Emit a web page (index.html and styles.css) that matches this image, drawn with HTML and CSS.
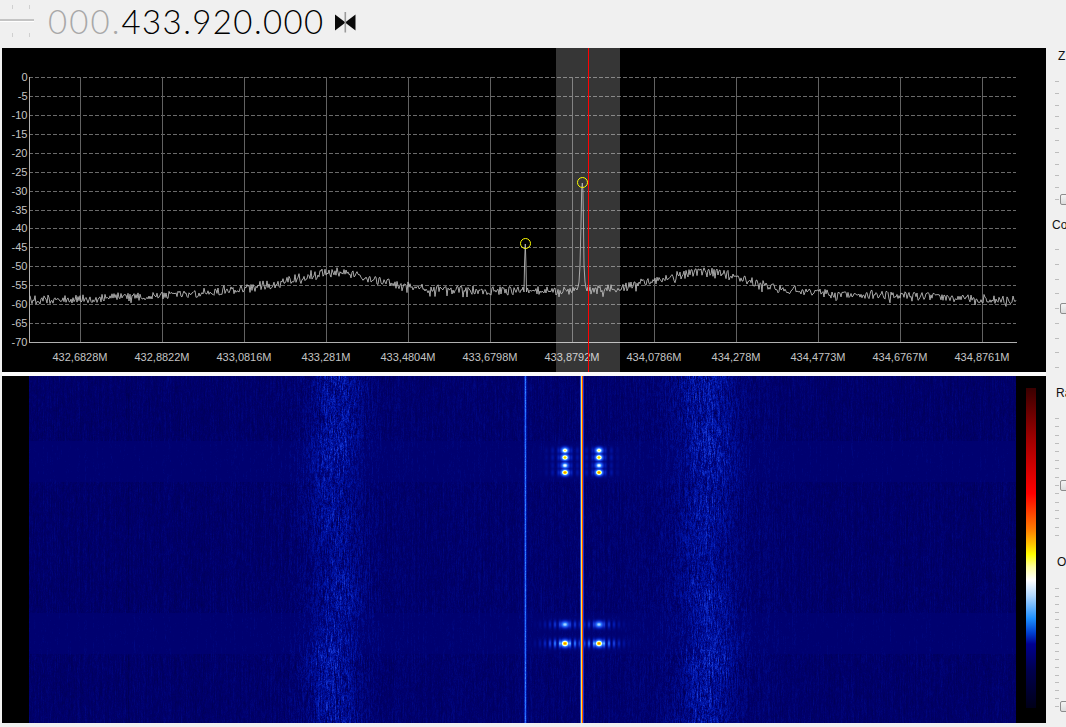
FILE: index.html
```html
<!DOCTYPE html>
<html lang="en">
<head>
<meta charset="utf-8">
<title>Spectrum analyzer</title>
<link rel="stylesheet" href="styles.css">
</head>
<body>
<div class="app">
  <header class="tuner">
    <svg class="dial" width="36" height="48" viewBox="0 0 36 48" aria-hidden="true">
      <rect x="0" y="19" width="34" height="2" fill="#c4c4c4"/>
      <rect x="0" y="21" width="34" height="1" fill="#ffffff"/>
      <rect x="12" y="5" width="1" height="4" fill="#d0d0d0"/>
      <rect x="29" y="5" width="1" height="4" fill="#d0d0d0"/>
      <rect x="12" y="33" width="1" height="4" fill="#d0d0d0"/>
      <rect x="29" y="33" width="1" height="4" fill="#d0d0d0"/>
    </svg>
    <div class="freq"><span class="freq-dim">000.</span>433.920.000</div>
    <svg class="swap" width="21" height="21" viewBox="0 0 21 21" aria-hidden="true">
      <path d="M0 2.5 L10.5 10.5 L0 18.5 Z" fill="#0a0a0a"/>
      <path d="M20.5 2.5 L10 10.5 L20.5 18.5 Z" fill="#0a0a0a"/>
      <rect x="9.5" y="0" width="1.6" height="20.5" fill="#9a9a9a"/>
    </svg>
  </header>
  <main class="body">
    <div class="displays">
      <section class="spectrum">
        <svg id="plot" class="plot" width="1044" height="324" viewBox="0 48 1044 324">
          <g id="grid"></g>
          <g id="ylabels" class="axis-text" text-anchor="end"></g>
          <g id="xlabels" class="axis-text" text-anchor="middle"></g>
          <rect class="band" x="554" y="48" width="64" height="324"/>
          <path id="trace" class="trace" d=""/>
          <circle class="peak" cx="523.5" cy="243.5" r="5"/>
          <circle class="peak" cx="580.5" cy="182.5" r="5"/>
          <rect class="tuned" x="586" y="48" width="1" height="324"/>
        </svg>
      </section>
      <section class="waterfall">
        <canvas id="fall" class="fall" width="987" height="347"></canvas>
        <div class="scale-col"><div class="scale"></div></div>
      </section>
    </div>
    <aside class="controls">
      <div class="group group-zoom">
        <div class="label label-z">Z</div>
        <div class="slider" data-first="18" data-step="11.8" data-ticks="11" data-handle="10"></div>
      </div>
      <div class="group group-contrast">
        <div class="label label-co">Co</div>
        <div class="slider" data-first="17" data-step="14.75" data-ticks="9" data-handle="4"></div>
      </div>
      <div class="group group-range">
        <div class="label label-ra">Ra</div>
        <div class="slider" data-first="18" data-step="8.36" data-ticks="15" data-handle="8"></div>
      </div>
      <div class="group group-offset">
        <div class="label label-o">O</div>
        <div class="slider" data-first="19" data-step="7.87" data-ticks="16" data-handle="15"></div>
      </div>
    </aside>
  </main>
</div>
<script src="app.js"></script>
</body>
</html>
```
FILE: styles.css
```css
* { box-sizing: border-box; }
html, body { margin: 0; padding: 0; height: 100%; overflow: hidden; background: #f0f0f0; }
body { font-family: "Liberation Sans", Arial, sans-serif; }
.app { display: flex; flex-direction: column; width: 1066px; height: 727px; }
.tuner { display: flex; align-items: flex-start; height: 48px; flex: none; }
.dial { flex: none; display: block; margin-right: 12px; }
.freq { font-family: Lato, "Open Sans", sans-serif; font-weight: 300; font-size: 33px; line-height: 42px; letter-spacing: 1.4px; color: #000; white-space: nowrap; width: 287px; }
.freq-dim { color: #a8a8a8; letter-spacing: 2.1px; }
.swap { flex: none; margin-top: 12px; display: block; }
.body { display: flex; flex: 1; min-height: 0; }
.displays { width: 1046px; padding-left: 2px; flex: none; display: flex; flex-direction: column; height: 675px; }
.spectrum { height: 324px; background: #000; flex: none; }
.plot { display: block; }
.axis-text { font-family: "Liberation Sans", Arial, sans-serif; font-size: 11px; fill: #c4c4c4; }
.grid-h { stroke: #6a6a6a; stroke-width: 1; stroke-dasharray: 4 2; shape-rendering: crispEdges; }
.grid-v { stroke: #626262; stroke-width: 1; shape-rendering: crispEdges; }
.grid-axis { stroke: #b0b0b0; stroke-width: 1; shape-rendering: crispEdges; }
.band { fill: rgba(255,255,255,0.21); }
.trace { fill: none; stroke: #b8b8b8; stroke-width: 0.9; }
.peak { fill: none; stroke: #ffff00; stroke-width: 1; }
.tuned { fill: #ff0000; }
.waterfall { display: flex; height: 351px; background: #000; flex: none; padding-left: 27px; border-top: 4px solid #fafafa; }
.fall { display: block; flex: none; }
.scale-col { flex: 1; padding: 12px 0 15px 10px; }
.scale { width: 10px; height: 320px; background: linear-gradient(to bottom, #3a0000 0%, #600000 6%, #a00000 16%, #d80000 26%, #ff0000 33%, #ff7a00 44%, #ffc800 49%, #ffff00 52%, #ffffa0 56%, #ffffff 60%, #b0d8ff 65%, #1e90ff 72%, #0040d0 76.5%, #000090 80%, #000050 88%, #000018 100%); }
.controls { width: 20px; flex: none; display: flex; flex-direction: column; overflow: hidden; height: 679px; }
.group { position: relative; flex: none; }
.group-zoom { height: 169px; }
.group-contrast { height: 168px; }
.group-range { height: 169px; }
.group-offset { height: 165px; }
.label { font-size: 12px; line-height: 14px; color: #111; white-space: nowrap; padding-top: 1px; }
.label-z { padding-left: 12px; }
.label-co { padding-left: 6px; }
.label-ra { padding-left: 10px; }
.label-o { padding-left: 11px; }
.slider { position: relative; }
.tick { position: absolute; left: 9px; width: 4px; height: 1px; background: #bdbdbd; }
.handle { position: absolute; left: 14px; width: 10px; height: 11px; border: 1px solid #8c8c8c; border-radius: 2px; background: linear-gradient(to bottom, #f4f4f4, #dcdcdc); }
```
FILE: app.js
```js
(function () {
  var NS = 'http://www.w3.org/2000/svg';
  var seed = 12345;
  function rnd() { seed = (seed * 1664525 + 1013904223) >>> 0; return seed / 4294967296; }
  function line(parent, cls, x1, y1, x2, y2) {
    var l = document.createElementNS(NS, 'line');
    l.setAttribute('class', cls);
    l.setAttribute('x1', x1); l.setAttribute('y1', y1);
    l.setAttribute('x2', x2); l.setAttribute('y2', y2);
    parent.appendChild(l);
  }
  function text(parent, x, y, s) {
    var t = document.createElementNS(NS, 'text');
    t.setAttribute('x', x); t.setAttribute('y', y);
    t.textContent = s;
    parent.appendChild(t);
  }
  // The svg starts 2px from the page's left edge, so page x = svg x + 2.
  var OX = 2;
  var grid = document.getElementById('grid');
  var yl = document.getElementById('ylabels');
  var xl = document.getElementById('xlabels');
  var i;
  for (i = 0; i <= 14; i++) {
    var y = Math.round(77 + i * 18.93);
    if (i < 14) line(grid, 'grid-h', 29 - OX, y + 0.5, 1016 - OX, y + 0.5);
    text(yl, 27.5 - OX, y + 4, String(i === 0 ? 0 : -5 * i));
  }
  var freqs = ['432,6828M','432,8822M','433,0816M','433,281M','433,4804M','433,6798M','433,8792M','434,0786M','434,278M','434,4773M','434,6767M','434,8761M'];
  for (i = 0; i < 12; i++) {
    var x = Math.round(80 + i * 81.97);
    line(grid, 'grid-v', x - OX + 0.5, 77, x - OX + 0.5, 342);
    text(xl, x - OX, 361, freqs[i]);
  }
  line(grid, 'grid-axis', 29.5 - OX, 77, 29.5 - OX, 342.5);
  line(grid, 'grid-axis', 29 - OX, 342.5, 1017 - OX, 342.5);

  // Spectrum envelope: page x -> page y of the noise floor.
  var env = [[29,300],[100,298],[200,293],[280,283],[310,275],[335,271],[360,276],[390,284],[430,289],[500,291],[580,291],[620,288],[650,281],[680,275],[705,271],[735,276],[770,287],[810,292],[900,296],[1017,300]];
  function envY(x) {
    for (var k = 0; k < env.length - 1; k++) {
      if (x <= env[k + 1][0]) {
        var t = (x - env[k][0]) / (env[k + 1][0] - env[k][0]);
        return env[k][1] + t * (env[k + 1][1] - env[k][1]);
      }
    }
    return 300;
  }
  var d = '';
  var px;
  for (px = 30; px <= 1016; px += 1) {
    var py = envY(px) + (rnd() - 0.5) * 9 + (rnd() > 0.9 ? 3 : 0);
    if (px > 576 && px < 588) continue;
    if (px > 521 && px < 529) continue;
    d += (d ? 'L' : 'M') + (px - OX).toFixed(1) + ' ' + py.toFixed(1);
    if (px === 521) {
      [[522,290],[523,287],[524,292],[524.6,262],[525.3,244],[525.9,262],[526.5,292],[527.5,288],[529,293]].forEach(function (p) {
        d += 'L' + (p[0] - OX) + ' ' + p[1];
      });
    }
    if (px === 576) {
      [[577,290],[578,287],[579,282],[580,265],[581,225],[581.7,190],[582.3,183],[582.9,190],[583.5,225],[584,265],[585,282],[586,288],[587,291]].forEach(function (p) {
        d += 'L' + (p[0] - OX) + ' ' + p[1];
      });
    }
  }
  document.getElementById('trace').setAttribute('d', d);

  // Waterfall.
  var cv = document.getElementById('fall');
  var W = cv.width, H = cv.height;
  var ctx = cv.getContext('2d');
  var img = ctx.createImageData(W, H);
  var stops = [[0,0,0,60],[0.16,0,0,108],[0.3,0,20,165],[0.45,25,60,215],[0.58,40,120,255],[0.68,170,215,255],[0.74,255,255,255],[0.82,255,255,0],[0.9,255,120,0],[1,255,0,0]];
  function color(v) {
    if (v <= 0) return stops[0];
    for (var k = 0; k < stops.length - 1; k++) {
      if (v <= stops[k + 1][0]) {
        var a = stops[k], b = stops[k + 1];
        var t = (v - a[0]) / (b[0] - a[0]);
        return [0, a[1] + t * (b[1] - a[1]), a[2] + t * (b[2] - a[2]), a[3] + t * (b[3] - a[3])];
      }
    }
    return stops[stops.length - 1];
  }
  function gauss(x, c, s) { return Math.exp(-(x - c) * (x - c) / (2 * s * s)); }
  var column = [];
  var walk = [];
  for (px = 0; px < W; px++) { column.push((rnd() - 0.5) * 0.03); walk.push(rnd() - 0.5); }
  var spotsX = [564.5, 598.5];
  var spotsA = [[450, 0.66], [457, 0.72], [465, 0.6], [472, 0.76]];
  for (var row = 0; row < H; row++) {
    var Y = row + 376;
    var slow = 0.85 + 0.15 * Math.sin(row / 37) + 0.1 * Math.sin(row / 11 + 1);
    for (px = 0; px < W; px++) {
      var X = px + 29;
      walk[px] = walk[px] * 0.72 + (rnd() - 0.5) * 0.55;
      var tex = walk[px] * 0.07 + (rnd() - 0.5) * 0.02;
      var base = 0.15 + column[px] + 0.012 * gauss(X, 590, 140);
      var wob = 4 * Math.sin(row / 29 + X / 400);
      var core = gauss(X, 335 + wob, 16) + gauss(X, 706 - wob, 18);
      var wide = gauss(X, 335, 36) + gauss(X, 706, 38);
      var hump = 0.1 * core * slow + 0.025 * wide;
      var v = base + hump + tex * (1 + 28 * hump);
      if (X === 128 || X === 126) v -= 0.03;
      // Signal bursts around the tuned carrier.
      var sp, sx;
      for (sp = 0; sp < spotsX.length; sp++) {
        sx = spotsX[sp];
        if (Y > 440 && Y < 482) {
          for (var q = 0; q < spotsA.length; q++) {
            var amp = spotsA[q][1] * gauss(Y, spotsA[q][0], 2.7);
            v = Math.max(v, 0.14 + amp * gauss(X, sx, 3.3));
            v = Math.max(v, 0.17 + amp * 0.3 * gauss(X, sx, 11) * (0.5 + 0.5 * Math.cos((X - sx) * 1.0)));
          }
        }
        if (Y > 612 && Y < 654) {
          var a1 = 0.54 * gauss(Y, 624, 2.9), a2 = 0.76 * gauss(Y, 643, 3.1);
          v = Math.max(v, 0.14 + a1 * gauss(X, sx, 3.8));
          v = Math.max(v, 0.14 + a2 * gauss(X, sx, 3.6));
          v = Math.max(v, 0.17 + a1 * 0.6 * gauss(X, sx, 13) * (0.5 + 0.5 * Math.cos((X - sx) * 1.25)));
          v = Math.max(v, 0.17 + a2 * 0.7 * gauss(X, sx, 14) * (0.5 + 0.5 * Math.cos((X - sx) * 1.25)));
        }
      }
      var c = color(v);
      if (X === 525) c = color(0.56 + (rnd() - 0.5) * 0.08);
      if (X === 524) c = color(0.36 + (rnd() - 0.5) * 0.06);
      if (X === 526) c = color(0.3 + (rnd() - 0.5) * 0.06);
      if (X === 580) c = color(0.5);
      if (X === 581) c = [0, 255, 225, 70];
      if (X === 582) c = [0, 255, 70, 0];
      if (X === 583) c = color(0.42);
      var o = (row * W + px) * 4;
      img.data[o] = c[1]; img.data[o + 1] = c[2]; img.data[o + 2] = c[3]; img.data[o + 3] = 255;
    }
  }
  ctx.putImageData(img, 0, 0);

  // Slider ticks and handle, spaced from each slider's data attributes.
  document.querySelectorAll('.slider').forEach(function (s) {
    var n = +s.dataset.ticks, h = +s.dataset.handle;
    var first = +s.dataset.first, step = +s.dataset.step;
    for (var t = 0; t < n; t++) {
      var el = document.createElement('div');
      el.className = 'tick';
      el.style.top = Math.round(first + t * step) + 'px';
      s.appendChild(el);
    }
    var hd = document.createElement('div');
    hd.className = 'handle';
    hd.style.top = Math.round(first + h * step - 5) + 'px';
    s.appendChild(hd);
  });
})();
```
